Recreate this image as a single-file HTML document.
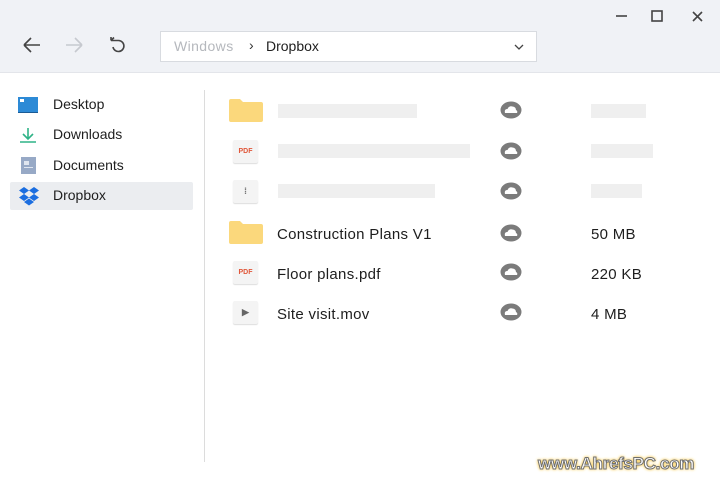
<!DOCTYPE html><html><head><style>
body{margin:0;width:720px;height:480px;background:#fff;font-family:"Liberation Sans",sans-serif;position:relative;overflow:hidden}
.top{position:absolute;left:0;top:0;width:720px;height:72px;background:#f0f2f6;border-bottom:1px solid #e3e5ea}
.a{position:absolute}
.addr{left:160px;top:31px;width:377px;height:31px;background:#fff;border:1px solid #d8dbe0;box-sizing:border-box}
.side{font-size:14px;color:#1e1e1e}
.sel{left:10px;top:182px;width:183px;height:28px;background:#ebedf0;border-radius:2px}
.bar{position:absolute;height:14px;background:#efefef}
.name{position:absolute;left:277px;font-size:15px;color:#1e1e1e;letter-spacing:.3px}
.size{position:absolute;left:591px;font-size:15px;color:#1e1e1e;letter-spacing:.3px}
.fold{position:absolute;left:229px;width:34px;height:23px}
.doc{position:absolute;left:233px;width:25px;height:23px;background:#f4f4f4;border-radius:2px;box-shadow:0 1px 1px #ddd;font-size:7px;font-weight:bold;color:#e0573a;text-align:center;line-height:23px}
.cl{position:absolute;left:500px;width:22px;height:18px}
</style></head><body>
<div class="top"></div>
<div class="a addr"></div>
<svg class="a" style="left:0;top:0" width="720" height="72">
<g stroke="#444" stroke-width="1.6" fill="none">
<path d="M24 45H40M24 45L31 38M24 45L31 52"/>
<path d="M66 45H82M82 45L75 38M82 45L75 52" stroke="#c6c9cf"/>
<path d="M111 40.5H118.5A5.5 5.5 0 1 1 113 47M111 40.5L114 37.5M111 40.5V37" />
<path d="M616 16H627"/><rect x="652" y="11" width="10" height="10"/><path d="M693 12L702 21M702 12L693 21"/>
<path d="M515 45L519 49L523 45" stroke-width="1.3"/>
</g></svg>
<div class="a" style="left:174px;top:38px;font-size:14px;color:#b5b8bd;letter-spacing:.4px">Windows</div>
<div class="a" style="left:249px;top:37px;font-size:14px;color:#333">›</div>
<div class="a" style="left:266px;top:38px;font-size:14px;color:#1e1e1e">Dropbox</div>
<div class="a" style="left:204px;top:90px;width:1px;height:372px;background:#dcdcdc"></div>
<div class="a sel"></div>
<div class="a" style="left:18px;top:97px;width:20px;height:15px;background:#2d8ad6;border-bottom:1px solid #1a5b95"></div>
<div class="a" style="left:20px;top:99px;width:4px;height:3px;background:#fff"></div>
<svg class="a" style="left:18px;top:126px" width="20" height="18"><path d="M10 2V12M5 8L10 13L15 8M2 16H18" stroke="#2fb387" stroke-width="1.6" fill="none"/></svg>
<div class="a" style="left:21px;top:157px;width:15px;height:17px;background:#97a9c6"></div>
<div class="a" style="left:24px;top:161px;width:5px;height:4px;background:#dfe5ef"></div>
<div class="a" style="left:24px;top:167px;width:9px;height:1px;background:#dfe5ef"></div>
<svg class="a" style="left:18px;top:186px" width="22" height="20"><g fill="#1b6ee0"><path d="M6 1L1 4.5L6 8L11 4.5Z M16 1L11 4.5L16 8L21 4.5Z M6 8L1 11.5L6 15L11 11.5Z M16 8L11 11.5L16 15L21 11.5Z M6 16L11 19.5L16 16L11 12.5Z"/></g></svg>
<div class="a side" style="left:53px;top:96px">Desktop</div>
<div class="a side" style="left:53px;top:126px">Downloads</div>
<div class="a side" style="left:53px;top:157px">Documents</div>
<div class="a side" style="left:53px;top:187px">Dropbox</div>

<svg class="fold" style="top:99px" viewBox="0 0 34 23"><path d="M0 2Q0 0 2 0H11L14 3H32Q34 3 34 5V21Q34 23 32 23H2Q0 23 0 21Z" fill="#fbd87c"/></svg>
<svg class="fold" style="top:221px" viewBox="0 0 34 23"><path d="M0 2Q0 0 2 0H11L14 3H32Q34 3 34 5V21Q34 23 32 23H2Q0 23 0 21Z" fill="#fbd87c"/></svg>
<div class="doc" style="top:140px">PDF</div>
<div class="doc" style="top:180px;color:#777;font-size:9px">⁞</div>
<div class="doc" style="top:261px">PDF</div>
<div class="doc" style="top:301px;color:#666;font-size:9px">▶</div>

<div class="bar" style="left:278px;top:104px;width:139px"></div>
<div class="bar" style="left:278px;top:144px;width:192px"></div>
<div class="bar" style="left:278px;top:184px;width:157px"></div>
<div class="bar" style="left:591px;top:104px;width:55px"></div>
<div class="bar" style="left:591px;top:144px;width:62px"></div>
<div class="bar" style="left:591px;top:184px;width:51px"></div>
<div class="name" style="top:226px">Construction Plans V1</div>
<div class="name" style="top:266px">Floor plans.pdf</div>
<div class="name" style="top:306px">Site visit.mov</div>
<div class="size" style="top:226px">50 MB</div>
<div class="size" style="top:266px">220 KB</div>
<div class="size" style="top:306px">4 MB</div>

<svg width="0" height="0" style="position:absolute"><defs><g id="c"><ellipse cx="11" cy="9" rx="10.5" ry="8.5" fill="#7b7b7b"/><path d="M5 12Q4 8 7.5 8Q9 4.5 12.5 5.5Q16 6 16 9Q18 10 17 12Z" fill="#fff"/></g></defs></svg>
<svg class="cl" style="top:101px"><use href="#c"/></svg>
<svg class="cl" style="top:142px"><use href="#c"/></svg>
<svg class="cl" style="top:182px"><use href="#c"/></svg>
<svg class="cl" style="top:224px"><use href="#c"/></svg>
<svg class="cl" style="top:263px"><use href="#c"/></svg>
<svg class="cl" style="top:303px"><use href="#c"/></svg>

<div class="a" style="left:538px;top:454px;font-size:17px;font-weight:bold;color:#fff;-webkit-text-stroke:1px #6f6f6f;text-shadow:0 0 3px #f5c542,0 0 3px #f5c542;letter-spacing:-.3px">www.AhrefsPC.com</div>
</body></html>
